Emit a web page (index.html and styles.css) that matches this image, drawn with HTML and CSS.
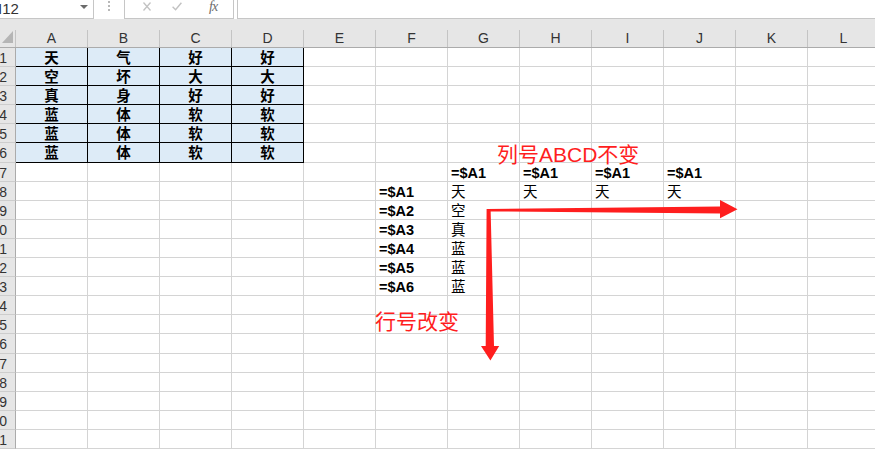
FILE: index.html
```html
<!DOCTYPE html>
<html lang="zh-CN">
<head>
  <meta charset="UTF-8">
  <title>绝对引用 $A1</title>
  <link rel="stylesheet" href="styles.css">
</head>
<body>

  <!-- 编辑栏 -->
  <div class="topbar">
    <div class="namebox"><span>I12</span><i class="caret"></i></div>
    <div class="grip"><i></i><i></i><i></i></div>
    <div class="fxbox">
      <svg class="icon-x" width="8" height="9" viewBox="0 0 8 9"><path d="M0.5 0.5 L7.5 8.5 M7.5 0.5 L0.5 8.5" stroke="#c2c2c2" stroke-width="1.3" fill="none"/></svg>
      <svg class="icon-ok" width="10" height="9" viewBox="0 0 10 9"><path d="M0.6 4.8 L3.6 7.8 L9.4 0.8" stroke="#c2c2c2" stroke-width="1.4" fill="none"/></svg>
      <span class="fx">fx</span>
    </div>
    <div class="formula"></div>
  </div>

  <!-- 列标 -->
  <div class="colhead">
    <div class="corner"><i></i></div>
    <div class="ch">A</div><div class="ch">B</div><div class="ch">C</div><div class="ch">D</div>
    <div class="ch">E</div><div class="ch">F</div><div class="ch">G</div><div class="ch">H</div>
    <div class="ch">I</div><div class="ch">J</div><div class="ch">K</div><div class="ch">L</div>
  </div>

  <!-- 单元格 -->
  <div class="row"><div class="rh">1</div><div class="c t">天</div><div class="c t">气</div><div class="c t">好</div><div class="c t">好</div><div class="c"></div><div class="c"></div><div class="c"></div><div class="c"></div><div class="c"></div><div class="c"></div><div class="c"></div><div class="c"></div></div>
  <div class="row"><div class="rh">2</div><div class="c t">空</div><div class="c t">坏</div><div class="c t">大</div><div class="c t">大</div><div class="c"></div><div class="c"></div><div class="c"></div><div class="c"></div><div class="c"></div><div class="c"></div><div class="c"></div><div class="c"></div></div>
  <div class="row"><div class="rh">3</div><div class="c t">真</div><div class="c t">身</div><div class="c t">好</div><div class="c t">好</div><div class="c"></div><div class="c"></div><div class="c"></div><div class="c"></div><div class="c"></div><div class="c"></div><div class="c"></div><div class="c"></div></div>
  <div class="row"><div class="rh">4</div><div class="c t">蓝</div><div class="c t">体</div><div class="c t">软</div><div class="c t">软</div><div class="c"></div><div class="c"></div><div class="c"></div><div class="c"></div><div class="c"></div><div class="c"></div><div class="c"></div><div class="c"></div></div>
  <div class="row"><div class="rh">5</div><div class="c t">蓝</div><div class="c t">体</div><div class="c t">软</div><div class="c t">软</div><div class="c"></div><div class="c"></div><div class="c"></div><div class="c"></div><div class="c"></div><div class="c"></div><div class="c"></div><div class="c"></div></div>
  <div class="row"><div class="rh">6</div><div class="c t">蓝</div><div class="c t">体</div><div class="c t">软</div><div class="c t">软</div><div class="c"></div><div class="c"></div><div class="c"></div><div class="c"></div><div class="c"></div><div class="c"></div><div class="c"></div><div class="c"></div></div>
  <div class="row"><div class="rh">7</div><div class="c"></div><div class="c"></div><div class="c"></div><div class="c"></div><div class="c"></div><div class="c"></div><div class="c b">=$A1</div><div class="c b">=$A1</div><div class="c b">=$A1</div><div class="c b">=$A1</div><div class="c"></div><div class="c"></div></div>
  <div class="row"><div class="rh">8</div><div class="c"></div><div class="c"></div><div class="c"></div><div class="c"></div><div class="c"></div><div class="c b">=$A1</div><div class="c">天</div><div class="c">天</div><div class="c">天</div><div class="c">天</div><div class="c"></div><div class="c"></div></div>
  <div class="row"><div class="rh">9</div><div class="c"></div><div class="c"></div><div class="c"></div><div class="c"></div><div class="c"></div><div class="c b">=$A2</div><div class="c">空</div><div class="c"></div><div class="c"></div><div class="c"></div><div class="c"></div><div class="c"></div></div>
  <div class="row"><div class="rh">10</div><div class="c"></div><div class="c"></div><div class="c"></div><div class="c"></div><div class="c"></div><div class="c b">=$A3</div><div class="c">真</div><div class="c"></div><div class="c"></div><div class="c"></div><div class="c"></div><div class="c"></div></div>
  <div class="row"><div class="rh">11</div><div class="c"></div><div class="c"></div><div class="c"></div><div class="c"></div><div class="c"></div><div class="c b">=$A4</div><div class="c">蓝</div><div class="c"></div><div class="c"></div><div class="c"></div><div class="c"></div><div class="c"></div></div>
  <div class="row"><div class="rh">12</div><div class="c"></div><div class="c"></div><div class="c"></div><div class="c"></div><div class="c"></div><div class="c b">=$A5</div><div class="c">蓝</div><div class="c"></div><div class="c"></div><div class="c"></div><div class="c"></div><div class="c"></div></div>
  <div class="row"><div class="rh">13</div><div class="c"></div><div class="c"></div><div class="c"></div><div class="c"></div><div class="c"></div><div class="c b">=$A6</div><div class="c">蓝</div><div class="c"></div><div class="c"></div><div class="c"></div><div class="c"></div><div class="c"></div></div>
  <div class="row"><div class="rh">14</div><div class="c"></div><div class="c"></div><div class="c"></div><div class="c"></div><div class="c"></div><div class="c"></div><div class="c"></div><div class="c"></div><div class="c"></div><div class="c"></div><div class="c"></div><div class="c"></div></div>
  <div class="row"><div class="rh">15</div><div class="c"></div><div class="c"></div><div class="c"></div><div class="c"></div><div class="c"></div><div class="c"></div><div class="c"></div><div class="c"></div><div class="c"></div><div class="c"></div><div class="c"></div><div class="c"></div></div>
  <div class="row"><div class="rh">16</div><div class="c"></div><div class="c"></div><div class="c"></div><div class="c"></div><div class="c"></div><div class="c"></div><div class="c"></div><div class="c"></div><div class="c"></div><div class="c"></div><div class="c"></div><div class="c"></div></div>
  <div class="row"><div class="rh">17</div><div class="c"></div><div class="c"></div><div class="c"></div><div class="c"></div><div class="c"></div><div class="c"></div><div class="c"></div><div class="c"></div><div class="c"></div><div class="c"></div><div class="c"></div><div class="c"></div></div>
  <div class="row"><div class="rh">18</div><div class="c"></div><div class="c"></div><div class="c"></div><div class="c"></div><div class="c"></div><div class="c"></div><div class="c"></div><div class="c"></div><div class="c"></div><div class="c"></div><div class="c"></div><div class="c"></div></div>
  <div class="row"><div class="rh">19</div><div class="c"></div><div class="c"></div><div class="c"></div><div class="c"></div><div class="c"></div><div class="c"></div><div class="c"></div><div class="c"></div><div class="c"></div><div class="c"></div><div class="c"></div><div class="c"></div></div>
  <div class="row"><div class="rh">20</div><div class="c"></div><div class="c"></div><div class="c"></div><div class="c"></div><div class="c"></div><div class="c"></div><div class="c"></div><div class="c"></div><div class="c"></div><div class="c"></div><div class="c"></div><div class="c"></div></div>
  <div class="row"><div class="rh">21</div><div class="c"></div><div class="c"></div><div class="c"></div><div class="c"></div><div class="c"></div><div class="c"></div><div class="c"></div><div class="c"></div><div class="c"></div><div class="c"></div><div class="c"></div><div class="c"></div></div>

  <!-- 批注：文本框和箭头 -->
  <div class="note note-col">列号ABCD不变</div>
  <div class="note note-row">行号改变</div>

  <svg class="arrows" width="875" height="449" viewBox="0 0 875 449">
    <polygon points="487,209 720,206.4 720,200 737.5,209.2 720,218.2 720,213.4 487,211.4" fill="#ff1e1e"/>
    <polygon points="486.6,209 490.6,209 494,346 499.2,346 490.4,360.5 481,346 485.7,346" fill="#ff1e1e"/>
  </svg>

</body>
</html>
```

FILE: styles.css
```css
body {
  margin: 0;
  width: 875px;
  height: 449px;
  overflow: hidden;
  position: relative;
  background: #fff;
  font-family: "Liberation Sans", "Noto Sans CJK SC", sans-serif;
  color: #000;
}

/* 编辑栏 */
.topbar {
  display: flex;
  height: 19px;
  background: #fff;
}
.namebox {
  width: 94px;
  box-sizing: border-box;
  border-right: 1px solid #c6c6c6;
  border-bottom: 1px solid #c6c6c6;
  display: flex;
  align-items: flex-start;
  font-size: 15px;
  line-height: 17px;
  color: #333;
  overflow: hidden;
}
.namebox span {
  margin-left: -2px;
}
.caret {
  width: 0;
  height: 0;
  margin: 5px 5px 0 auto;
  border-left: 4px solid transparent;
  border-right: 4px solid transparent;
  border-top: 4px solid #6b6b6b;
}
.grip {
  width: 30px;
  display: flex;
  flex-direction: column;
  align-items: center;
  gap: 2px;
  padding-top: 1px;
}
.grip i {
  width: 2px;
  height: 2px;
  background: #b8b8b8;
}
.fxbox {
  width: 110px;
  box-sizing: border-box;
  border: 1px solid #c6c6c6;
  border-top: 0;
  display: flex;
  align-items: flex-start;
  padding-top: 2px;
}
.icon-x {
  margin-left: 18px;
}
.icon-ok {
  margin-left: 21px;
}
.fx {
  margin-left: 27px;
  margin-top: -3px;
  font-family: "Liberation Serif", serif;
  font-style: italic;
  font-size: 14px;
  color: #6d6d6d;
  letter-spacing: -1px;
}
.formula {
  flex: 1;
  margin-left: 3px;
  border-left: 1px solid #c6c6c6;
  border-bottom: 1px solid #c6c6c6;
}

/* 列标 */
.colhead {
  display: flex;
  height: 29px;
  box-sizing: border-box;
  padding-top: 11px;
  background: #e6e6e6;
  border-bottom: 1px solid #ababab;
}
.corner {
  width: 16px;
  flex: none;
  box-sizing: border-box;
  border-right: 1px solid #c4c4c4;
  display: flex;
  justify-content: flex-end;
  align-items: flex-start;
}
.corner i {
  width: 0;
  height: 0;
  margin: 1px 2px 0 0;
  border-left: 11px solid transparent;
  border-bottom: 12px solid #b5b5b5;
}
.ch {
  width: 72px;
  flex: none;
  box-sizing: border-box;
  border-right: 1px solid #c4c4c4;
  text-align: center;
  font-size: 14px;
  line-height: 17px;
  color: #333;
}

/* 行 */
.row {
  display: flex;
  height: 19.1px;
}
.rh {
  width: 16px;
  flex: none;
  box-sizing: border-box;
  background: #e6e6e6;
  border-right: 1px solid #ababab;
  border-bottom: 1px solid #cdcdcd;
  display: flex;
  justify-content: flex-end;
  padding: 1px 8px 0 0;
  overflow: hidden;
  font-size: 14px;
  line-height: 18px;
  color: #333;
}
.c {
  width: 72px;
  flex: none;
  box-sizing: border-box;
  border-right: 1px solid #d4d4d4;
  border-bottom: 1px solid #d4d4d4;
  padding: 1px 0 0 3px;
  font-size: 14.5px;
  line-height: 18px;
  white-space: nowrap;
}
.c.t {
  background: #ddebf7;
  border-color: #000;
  text-align: center;
  padding-left: 0;
  font-weight: bold;
}
.c.b {
  font-weight: bold;
}

/* 批注 */
.note {
  position: absolute;
  color: #ff1e1e;
  font-size: 21px;
  line-height: 21px;
  white-space: nowrap;
}
.note-col {
  left: 497px;
  top: 144px;
}
.note-row {
  left: 375px;
  top: 311px;
}
.arrows {
  position: absolute;
  left: 0;
  top: 0;
  pointer-events: none;
}
```
